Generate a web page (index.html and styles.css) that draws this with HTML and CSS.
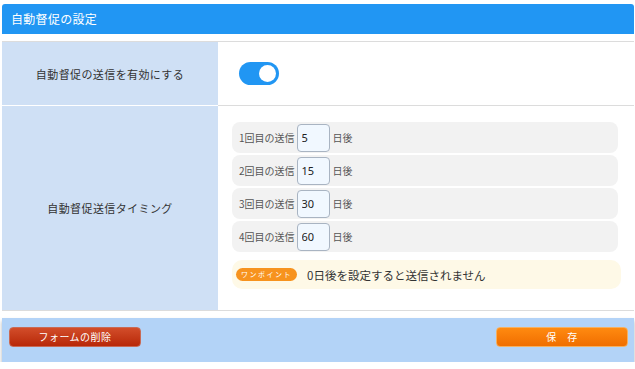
FILE: index.html
```html
<!DOCTYPE html>
<html>
<head>
  <meta charset="utf-8">
  <title>自動督促の設定</title>
  <link rel="stylesheet" href="styles.css">
</head>
<body>
  <div id="panel">
    <div class="title">自動督促の設定</div>
    <table class="settings">
      <tr class="row-enable">
        <th>自動督促の送信を有効にする</th>
        <td><span class="toggle"><span class="knob"></span></span></td>
      </tr>
      <tr class="row-timing">
        <th>自動督促送信タイミング</th>
        <td>
          <div class="step"><span class="label">1回目の送信</span><input class="days" type="text" value="5"><span class="unit">日後</span></div>
          <div class="step"><span class="label">2回目の送信</span><input class="days" type="text" value="15"><span class="unit">日後</span></div>
          <div class="step"><span class="label">3回目の送信</span><input class="days" type="text" value="30"><span class="unit">日後</span></div>
          <div class="step"><span class="label">4回目の送信</span><input class="days" type="text" value="60"><span class="unit">日後</span></div>
          <div class="tip"><span class="badge">ワンポイント</span><span class="tip-text">0日後を設定すると送信されません</span></div>
        </td>
      </tr>
    </table>
    <div class="actions">
      <div class="btn btn-delete">フォームの削除</div>
      <div class="btn btn-save">保　存</div>
    </div>
  </div>
</body>
</html>
```

FILE: styles.css
```css
body {
    margin: 0;
    font-family: "Noto Sans CJK JP", "Noto Sans", sans-serif;
    background-color: #ffffff;
    color: #333;
    }

#panel {
    padding: 4px 1px 0 2px;
    }

.title {
    height: 30px;
    line-height: 30px;
    padding-left: 9px;
    background-color: #2196f3;
    color: #fff;
    font-size: 12px;
    letter-spacing: 0.3px;
    border-radius: 3px 3px 0 0;
    }

.settings {
    width: 100%;
    margin-top: 7px;
    border-collapse: collapse;
    border-top: 1px solid #dcdcdc;
    border-bottom: 1px solid #dcdcdc;
    }

.settings th {
    width: 216px;
    padding: 0;
    background-color: #cfe0f5;
    font-size: 11px;
    font-weight: normal;
    letter-spacing: 0.4px;
    color: #333;
    }

.settings td {
    padding: 0 16px 0 14px;
    vertical-align: middle;
    }

.row-enable th,
.row-enable td {
    height: 63px;
    border-bottom: 1px solid #dcdcdc;
    }

.row-enable th {
    border-bottom-color: #ffffff;
    }

.row-timing td {
    padding-top: 16px;
    padding-bottom: 21px;
    }

.row-timing th {
    height: 204px;
    }

.toggle {
    display: block;
    position: relative;
    width: 40px;
    height: 23px;
    margin-left: 7px;
    border-radius: 12px;
    background-color: #2196f3;
    }

.knob {
    position: absolute;
    top: 3px;
    right: 3px;
    width: 17px;
    height: 17px;
    border-radius: 50%;
    background-color: #fff;
    }

.step {
    display: flex;
    align-items: center;
    height: 31px;
    margin-bottom: 2px;
    padding-left: 7px;
    border-radius: 8px;
    background-color: #f2f2f2;
    font-size: 10px;
    color: #555;
    }

.label {
    margin-right: 2px;
    }

.days {
    width: 33px;
    height: 28px;
    box-sizing: border-box;
    padding: 0 4px;
    border: 1px solid #a9b4c2;
    border-radius: 4px;
    background-color: #f1f8ff;
    font-family: "Noto Sans", sans-serif;
    font-size: 11px;
    color: #222;
    }

.unit {
    margin-left: 3px;
    }

.tip {
    display: flex;
    align-items: center;
    height: 29px;
    margin-top: 8px;
    margin-right: -3px;
    padding-left: 4px;
    border-radius: 10px;
    background-color: #fef9e7;
    }

.badge {
    display: inline-block;
    width: 61px;
    height: 13px;
    line-height: 13px;
    border-radius: 7px;
    background-color: #f7931e;
    color: #fff;
    font-size: 7px;
    text-align: center;
    letter-spacing: 1.5px;
    }

.tip-text {
    margin-left: 10px;
    font-size: 11.5px;
    color: #333;
    }

.actions {
    display: flex;
    justify-content: space-between;
    align-items: flex-start;
    height: 44px;
    margin-top: 7px;
    padding: 9px 6px 0 7px;
    box-sizing: border-box;
    background-color: #b3d3f7;
    box-shadow: 0 3px 4px rgba(0, 0, 0, 0.3);
    }

.btn {
    width: 132px;
    height: 20px;
    line-height: 18px;
    border-radius: 4px;
    color: #fff;
    font-size: 10px;
    letter-spacing: 0.5px;
    text-align: center;
    box-sizing: border-box;
    }

.btn-delete {
    background: linear-gradient(#d24d2a, #b82808);
    border: 1px solid #c86a55;
    }

.btn-save {
    background: linear-gradient(#ff8a10, #f06e00);
    border: 1px solid #f5b060;
    }
```
